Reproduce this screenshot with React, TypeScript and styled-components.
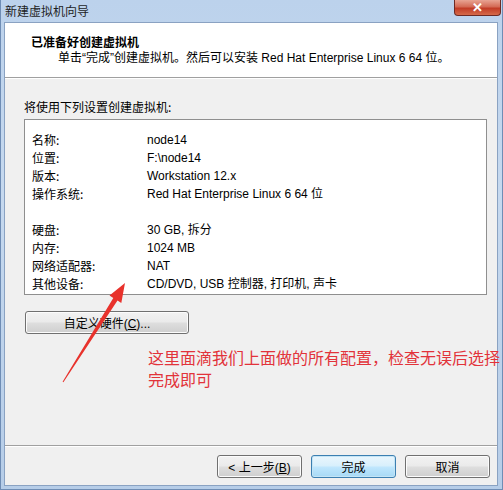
import React from "react";
import styled, { createGlobalStyle } from "styled-components";

const Global = createGlobalStyle`
  html, body { margin: 0; padding: 0; background: #ffffff; }
  body { font-family: "Liberation Sans", "Noto Sans CJK SC", sans-serif; font-size: 12px; color: #000; }
`;

const Window = styled.div`
  position: relative;
  width: 503px;
  height: 490px;
  box-sizing: border-box;
  display: flex;
  flex-direction: column;
  background: linear-gradient(180deg, #bcd2ec 0%, #c6d9ef 40%, #b6cde8 100%);
  padding: 0 4px 3px 3px;
  border-left: 1px solid #6f8db5;
  border-right: 1px solid #6f8db5;
  border-bottom: 1px solid #6f8db5;
`;

const TitleBar = styled.div`
  height: 22px;
  display: flex;
  align-items: flex-start;
  justify-content: space-between;
  flex-shrink: 0;
`;

const TitleText = styled.div`
  font-family: "Noto Sans CJK SC", sans-serif;
  font-size: 12px;
  line-height: 22px;
  color: #1e1e1e;
  padding-left: 1px;
`;

const CloseButton = styled.div`
  width: 47px;
  height: 16px;
  margin-right: -3px;
  border: 1px solid #6e2a24;
  border-top: none;
  border-radius: 0 0 4px 4px;
  background: linear-gradient(180deg, #e8a493 0%, #d46a55 45%, #c23c26 55%, #d56a4a 100%);
  display: flex;
  align-items: center;
  justify-content: center;
  color: #fff;
  font-weight: bold;
  font-size: 13px;
  line-height: 1;
  box-sizing: border-box;
`;

const Client = styled.div`
  flex: 1;
  display: flex;
  flex-direction: column;
  background: #f0f0f0;
  border: 1px solid #8aa2c2;
`;

const Header = styled.div`
  height: 55px;
  box-sizing: border-box;
  background: #ffffff;
  padding: 11px 0 0 26px;
  border-bottom: 1px solid #a0a0a0;
  box-shadow: 0 1px 0 #ffffff;
  flex-shrink: 0;
`;

const HeaderTitle = styled.div`
  font-family: "Noto Sans CJK SC", sans-serif;
  font-weight: bold;
  font-size: 12px;
  line-height: 16px;
`;

const HeaderSub = styled.div`
  margin-left: 27px;
  font-size: 12px;
  line-height: 16px;
`;

const Body = styled.div`
  flex: 1;
  padding: 21px 10px 0 19px;
  display: flex;
  flex-direction: column;
`;

const Label = styled.div`
  line-height: 16px;
  font-family: "Noto Sans CJK SC", sans-serif;
`;

const SummaryBox = styled.div`
  margin-top: 4px;
  height: 176px;
  box-sizing: border-box;
  background: #ffffff;
  border: 1px solid #8f8f8f;
  padding: 11px 7px 0 7px;
`;

const Row = styled.div<{ $gap?: boolean }>`
  display: grid;
  grid-template-columns: 115px 1fr;
  height: 18px;
  line-height: 18px;
  margin-top: ${(p) => (p.$gap ? "18px" : "0")};
`;

const Key = styled.span`
  font-family: "Noto Sans CJK SC", sans-serif;
`;

const Val = styled.span`
  font-family: "Liberation Sans", "Noto Sans CJK SC", sans-serif;
`;

const Button = styled.button<{ $w?: number; $primary?: boolean }>`
  width: ${(p) => p.$w ?? 85}px;
  height: 23px;
  box-sizing: border-box;
  padding: 0;
  font-family: "Liberation Sans", "Noto Sans CJK SC", sans-serif;
  font-size: 12px;
  color: #000;
  border-radius: 3px;
  border: 1px solid ${(p) => (p.$primary ? "#3c7fb1" : "#707070")};
  background: ${(p) =>
    p.$primary
      ? "linear-gradient(180deg, #eaf6fd 0%, #d9f0fc 45%, #bee6fd 55%, #a7d9f5 100%)"
      : "linear-gradient(180deg, #f2f2f2 0%, #ebebeb 45%, #dddddd 55%, #cfcfcf 100%)"};
  box-shadow: inset 0 0 0 1px ${(p) => (p.$primary ? "#c4e5f6" : "#fcfcfc")};
`;

const CustomButton = styled(Button)`
  margin-top: 16px;
  margin-left: 1px;
`;

const Note = styled.div`
  margin-top: 12px;
  margin-left: 124px;
  font-family: "Noto Sans CJK SC", sans-serif;
  font-size: 16px;
  line-height: 22px;
  color: #e2333a;
  white-space: nowrap;
`;

const Footer = styled.div`
  height: 40px;
  flex-shrink: 0;
  box-sizing: border-box;
  border-top: 1px solid #a0a0a0;
  box-shadow: inset 0 1px 0 #ffffff;
  display: flex;
  justify-content: flex-end;
  align-items: flex-start;
  padding: 9px 7px 0 0;
  gap: 9px;
`;

const Arrow = styled.svg`
  position: absolute;
  left: 0;
  top: 0;
  pointer-events: none;
`;

const Ul = styled.span`
  text-decoration: underline;
`;

export default function App() {
  return (
    <>
      <Global />
      <Window>
        <TitleBar>
          <TitleText>新建虚拟机向导</TitleText>
          <CloseButton>✕</CloseButton>
        </TitleBar>
        <Client>
          <Header>
            <HeaderTitle>已准备好创建虚拟机</HeaderTitle>
            <HeaderSub>单击“完成”创建虚拟机。然后可以安装 Red Hat Enterprise Linux 6 64 位。</HeaderSub>
          </Header>
          <Body>
            <Label>将使用下列设置创建虚拟机:</Label>
            <SummaryBox>
              <Row><Key>名称:</Key><Val>node14</Val></Row>
              <Row><Key>位置:</Key><Val>F:\node14</Val></Row>
              <Row><Key>版本:</Key><Val>Workstation 12.x</Val></Row>
              <Row><Key>操作系统:</Key><Val>Red Hat Enterprise Linux 6 64 位</Val></Row>
              <Row $gap><Key>硬盘:</Key><Val>30 GB, 拆分</Val></Row>
              <Row><Key>内存:</Key><Val>1024 MB</Val></Row>
              <Row><Key>网络适配器:</Key><Val>NAT</Val></Row>
              <Row><Key>其他设备:</Key><Val>CD/DVD, USB 控制器, 打印机, 声卡</Val></Row>
            </SummaryBox>
            <CustomButton $w={164}>自定义硬件(<Ul>C</Ul>)...</CustomButton>
            <Note>
              这里面滴我们上面做的所有配置，检查无误后选择
              <br />
              完成即可
            </Note>
          </Body>
          <Footer>
            <Button>&lt; 上一步(<Ul>B</Ul>)</Button>
            <Button $primary>完成</Button>
            <Button>取消</Button>
          </Footer>
        </Client>
        <Arrow width="503" height="490" viewBox="0 0 503 490">
          <polygon
            points="124,283 120.3,302.9 116.5,300.5 62.4,382.3 61.6,381.7 112.3,297.9 108.5,295.5"
            fill="#e8322c"
          />
        </Arrow>
      </Window>
    </>
  );
}
